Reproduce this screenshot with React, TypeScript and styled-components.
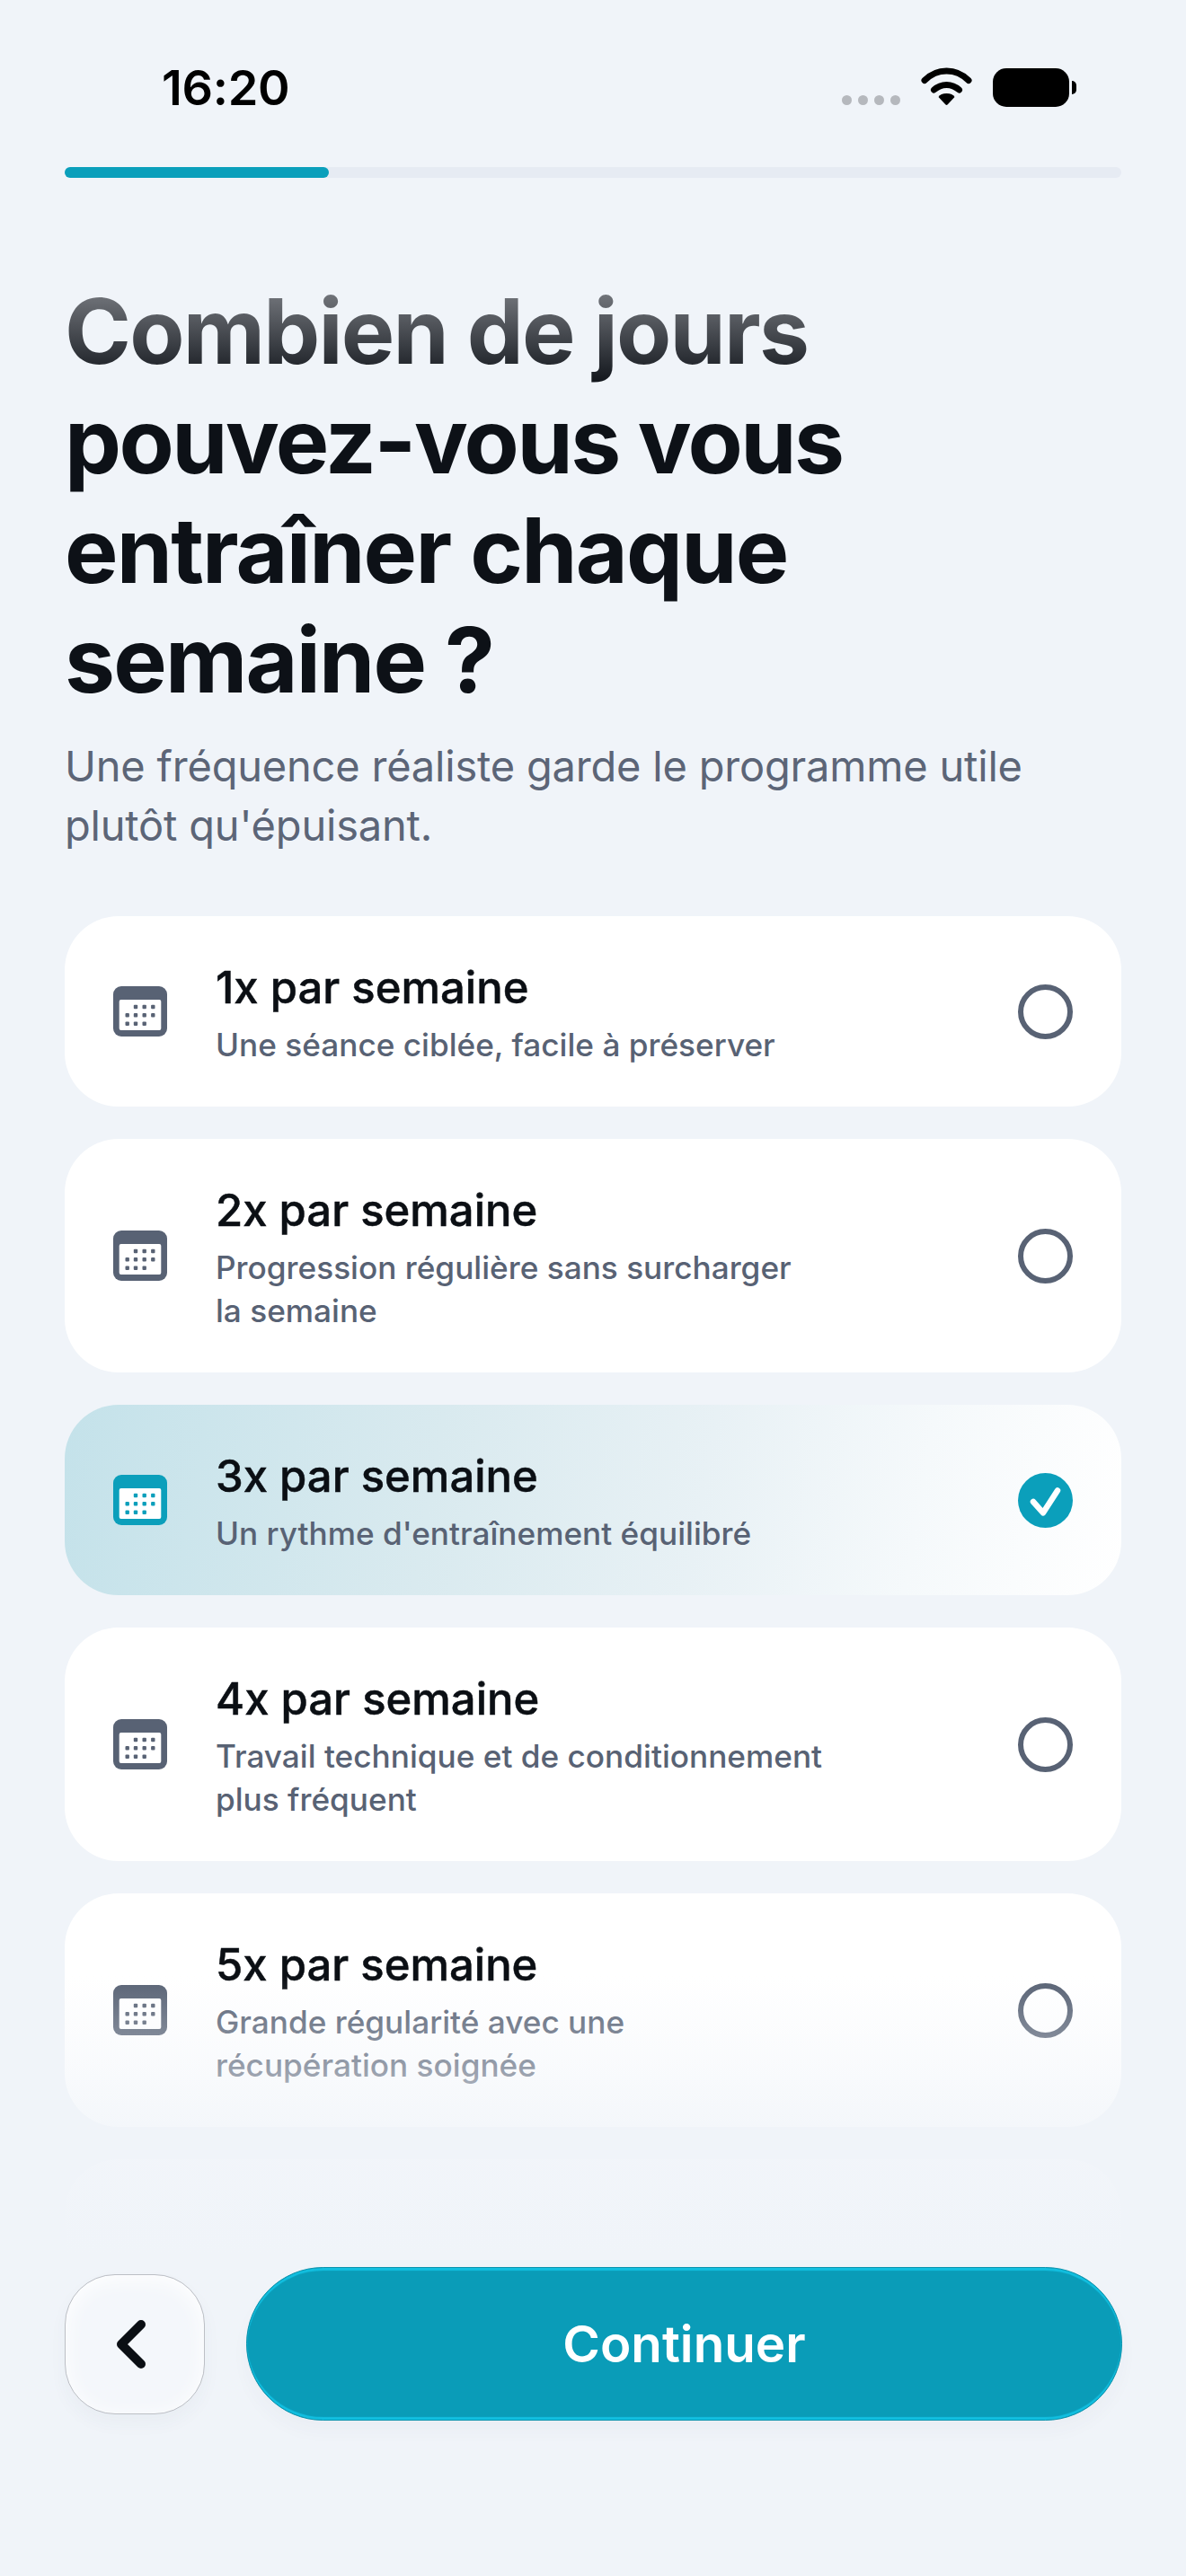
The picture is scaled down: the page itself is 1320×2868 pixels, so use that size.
import React from "react";
import styled, { createGlobalStyle } from "styled-components";

const GlobalStyle = createGlobalStyle`
  html, body {
    margin: 0;
    padding: 0;
    background: #f0f4f9;
  }
  * {
    box-sizing: border-box;
  }
`;

interface IOption {
  title: string;
  lines: string[];
  selected?: boolean;
}

const options: IOption[] = [
  { title: "1x par semaine", lines: ["Une séance ciblée, facile à préserver"] },
  {
    title: "2x par semaine",
    lines: ["Progression régulière sans surcharger", "la semaine"],
  },
  {
    title: "3x par semaine",
    lines: ["Un rythme d'entraînement équilibré"],
    selected: true,
  },
  {
    title: "4x par semaine",
    lines: ["Travail technique et de conditionnement", "plus fréquent"],
  },
  {
    title: "5x par semaine",
    lines: ["Grande régularité avec une", "récupération soignée"],
  },
];

const calendarDots = [
  [25, 23], [34.7, 23], [44.3, 23],
  [15.7, 32.3], [25, 32.3], [34.7, 32.3], [44.3, 32.3],
  [15.7, 41.7], [25, 41.7], [34.7, 41.7],
];

const CalendarIcon: React.FC<{ color: string }> = ({ color }) => (
  <svg width="60" height="56" viewBox="0 0 60 56">
    <rect width="60" height="56" rx="9" fill={color} />
    <rect x="6.7" y="15" width="46.6" height="34" rx="2" fill="#fff" />
    {calendarDots.map(([x, y]) => (
      <rect
        key={`${x}-${y}`}
        x={x - 2.2}
        y={y - 2.2}
        width="4.4"
        height="4.4"
        rx="1"
        fill={color}
      />
    ))}
  </svg>
);

const App: React.FC = () => {
  return (
    <Page>
      <GlobalStyle />
      <StatusBar>
        <Time>16:20</Time>
        <StatusIcons>
          <SignalDots>
            <i />
            <i />
            <i />
            <i />
          </SignalDots>
          <svg width="57" height="42" viewBox="0 0 57 42">
            <path
              d="M4 14.5C18 0.5 39 0.5 53 14.5"
              fill="none"
              stroke="#000"
              strokeWidth="7"
              strokeLinecap="round"
            />
            <path
              d="M14.5 25C22.5 17.5 34.5 17.5 42.5 25"
              fill="none"
              stroke="#000"
              strokeWidth="7"
              strokeLinecap="round"
            />
            <path
              d="M28.5 29C33 29 36 30.5 37.5 33L29.5 41.5C29 42 28 42 27.5 41.5L19.5 33C21 30.5 24 29 28.5 29Z"
              fill="#000"
            />
          </svg>
          <Battery />
        </StatusIcons>
      </StatusBar>
      <Progress>
        <ProgressFill style={{ width: `${(1 / 4) * 100}%` }} />
      </Progress>
      <Title>
        Combien de jours
        <br />
        <TightLine>pouvez-vous vous</TightLine>
        <br />
        entraîner chaque
        <br />
        semaine ?
      </Title>
      <Subtitle>
        Une fréquence réaliste garde le programme utile
        <br />
        plutôt qu'épuisant.
      </Subtitle>
      <ListArea>
        <List>
          {options.map((option) => (
            <Card key={option.title} $selected={option.selected}>
              <IconSlot>
                <CalendarIcon color={option.selected ? "#0b9fbb" : "#586274"} />
              </IconSlot>
              <CardText>
                <CardTitle>{option.title}</CardTitle>
                <CardSub>
                  {option.lines.map((line) => (
                    <div key={line}>{line}</div>
                  ))}
                </CardSub>
              </CardText>
              {option.selected ? (
                <svg width="61" height="61" viewBox="0 0 61 61">
                  <circle cx="30.5" cy="30.5" r="30.5" fill="#0b9fbb" />
                  <path
                    d="M17 32L28 44.3L44 19.5"
                    fill="none"
                    stroke="#fff"
                    strokeWidth="6.5"
                    strokeLinecap="round"
                    strokeLinejoin="round"
                  />
                </svg>
              ) : (
                <Radio />
              )}
            </Card>
          ))}
          <GhostCard />
        </List>
        <ListFade />
      </ListArea>
      <Footer>
        <BackButton>
          <svg width="32" height="54" viewBox="0 0 32 54">
            <path
              d="M27 5L5 27L27 49"
              fill="none"
              stroke="#0b0f14"
              strokeWidth="10"
              strokeLinecap="round"
              strokeLinejoin="round"
            />
          </svg>
        </BackButton>
        <ContinueButton>Continuer</ContinueButton>
      </Footer>
    </Page>
  );
};

export default App;

const Page = styled.div`
  width: 1320px;
  height: 2868px;
  overflow: hidden;
  padding: 0 72px;
  background: #f0f4f9;
  font-family: Inter, "Noto Sans", sans-serif;
`;

const StatusBar = styled.div`
  height: 186px;
  padding: 66px 0 0 108px;
  display: flex;
  justify-content: space-between;
  align-items: flex-start;
`;

const Time = styled.div`
  font-size: 54px;
  line-height: 64px;
  font-weight: 600;
  letter-spacing: -0.3px;
  color: #000;
`;

const StatusIcons = styled.div`
  display: flex;
  align-items: flex-start;
  gap: 23px;
  padding: 9px 58px 0 0;
`;

const SignalDots = styled.div`
  display: flex;
  gap: 7px;
  margin-top: 31px;
  i {
    width: 11px;
    height: 11px;
    border-radius: 50%;
    background: #b5b8bd;
  }
`;

const Battery = styled.div`
  width: 85px;
  height: 43px;
  margin-top: 1px;
  border-radius: 15px;
  background: #000;
  position: relative;
  &::after {
    content: "";
    position: absolute;
    left: 88px;
    top: 14px;
    width: 5px;
    height: 15px;
    border-radius: 0 8px 8px 0;
    background: #000;
  }
`;

const Progress = styled.div`
  height: 12px;
  border-radius: 6px;
  background: #e6ebf3;
`;

const ProgressFill = styled.div`
  height: 100%;
  border-radius: 6px;
  background: #0a9fbb;
`;

const Title = styled.h1`
  margin: 110px 0 0;
  font-size: 100px;
  line-height: 122px;
  font-weight: 700;
  letter-spacing: -1.8px;
  background: linear-gradient(180deg, #83868c 0, #0d1117 123px);
  -webkit-background-clip: text;
  background-clip: text;
  color: transparent;
`;

const TightLine = styled.span`
  letter-spacing: -2.5px;
`;

const Subtitle = styled.p`
  margin: 24px 0 0;
  font-size: 47px;
  line-height: 66px;
  font-weight: 400;
  letter-spacing: -0.2px;
  color: #5c6577;
`;

const ListArea = styled.div`
  position: relative;
  height: 1504px;
  margin-top: 68px;
  overflow: hidden;
`;

const List = styled.div`
  display: flex;
  flex-direction: column;
  gap: 36px;
`;

const Card = styled.div<{ $selected?: boolean }>`
  display: flex;
  align-items: center;
  padding: 45px 54px;
  border-radius: 60px;
  background: ${(p) =>
    p.$selected
      ? "linear-gradient(100deg, #c4e2ea 0%, #d9eaef 35%, #e8f1f5 60%, #f5f9fb 80%, #ffffff 100%)"
      : "#fff"};
`;

const IconSlot = styled.div`
  width: 114px;
  flex: none;
  display: flex;
`;

const CardText = styled.div`
  flex: 1;
  padding-top: 5px;
`;

const CardTitle = styled.div`
  font-size: 49px;
  line-height: 60px;
  font-weight: 500;
  -webkit-text-stroke: 0.5px #0b0f14;
  color: #0b0f14;
`;

const CardSub = styled.div`
  margin-top: 9px;
  font-size: 35.2px;
  line-height: 48px;
  font-weight: 500;
  color: #586274;
`;

const Radio = styled.div`
  width: 61px;
  height: 61px;
  border-radius: 50%;
  border: 6.5px solid #586274;
`;

const GhostCard = styled.div`
  height: 212px;
  border-radius: 60px;
  background: #fff;
`;

const ListFade = styled.div`
  position: absolute;
  left: 0;
  right: 0;
  top: 1180px;
  bottom: 0;
  background: linear-gradient(
    180deg,
    rgba(240, 244, 249, 0) 0,
    rgba(240, 244, 249, 0.4) 100px,
    rgba(240, 244, 249, 0.9) 200px,
    #f0f4f9 310px
  );
`;

const Footer = styled.div`
  margin-right: -1px;
  display: flex;
  align-items: center;
  gap: 46px;
`;

const BackButton = styled.button`
  width: 156px;
  height: 156px;
  flex: none;
  padding: 0 8px 0 0;
  display: flex;
  align-items: center;
  justify-content: center;
  border: 1.5px solid #bcbfc5;
  border-radius: 56px;
  background: #f4f7fb;
  box-shadow: inset 0 4px 24px #ffffff, 0 10px 20px rgba(60, 70, 90, 0.04);
`;

const ContinueButton = styled.button`
  flex: 1;
  height: 171px;
  border: 1.5px solid #0b93ad;
  border-radius: 86px;
  background: #0a9cb8;
  box-shadow: inset 0 3px 1px #12bfe0, inset 0 -3px 1px #12bfe0, 0 12px 20px rgba(60, 70, 90, 0.03);
  font-family: Inter, sans-serif;
  font-size: 56.5px;
  font-weight: 600;
  color: #fff;
`;
